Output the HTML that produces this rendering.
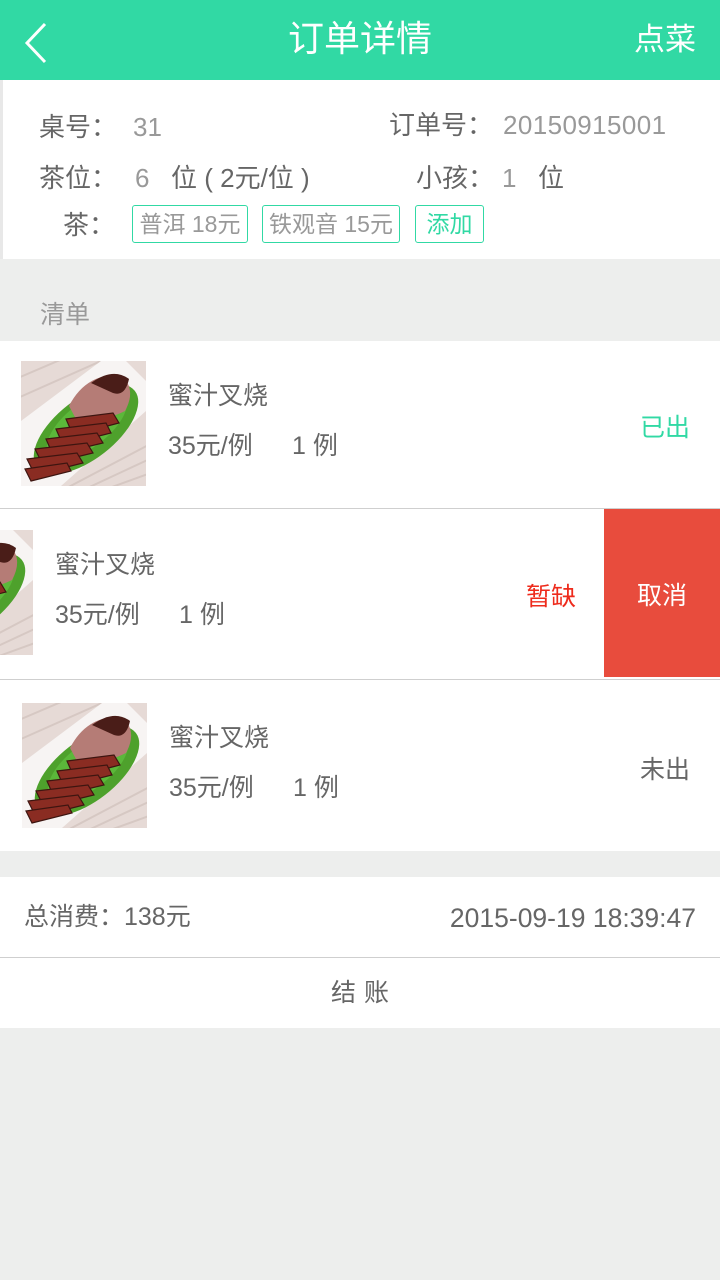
<!DOCTYPE html>
<html><head><meta charset="utf-8"><style>
*{margin:0;padding:0;box-sizing:border-box}
body{width:720px;height:1280px;background:#edeeed;font-family:"Liberation Sans","Noto Sans CJK SC",sans-serif;color:#666;position:relative;overflow:hidden}
.a{position:absolute;white-space:nowrap}
.hdr{position:absolute;left:0;top:0;width:720px;height:80px;background:#31d9a4}
.w{position:absolute;left:0;width:720px;background:#fff}
.tag{position:absolute;top:205px;height:38px;border:1px solid #31d9a4;border-radius:3px;font-size:23px;line-height:36px;text-align:center;color:#999}
.line{position:absolute;left:0;width:720px;height:1px;background:#cfcfcf}
.f{font-size:26px;line-height:34px}
.t{font-size:25px;line-height:34px}
</style></head><body>
<svg width="0" height="0" style="position:absolute"><defs>
<g id="food">
<rect width="125" height="125" fill="#e6dad6"/>
<g stroke="#d6c8c3" stroke-width="2">
<line x1="-10" y1="20" x2="60" y2="-10"/><line x1="-10" y1="40" x2="80" y2="0"/><line x1="60" y1="130" x2="135" y2="95"/><line x1="80" y1="130" x2="135" y2="110"/><line x1="40" y1="130" x2="135" y2="80"/>
</g>
<polygon points="0,100 0,125 40,125 125,50 125,20 105,0 80,0 0,60" fill="#f7f4f3"/>
<ellipse cx="65" cy="68" rx="62" ry="30" transform="rotate(-38 65 68)" fill="#4ea12c"/>
<ellipse cx="66" cy="64" rx="48" ry="22" transform="rotate(-38 66 64)" fill="#5bb83a"/>
<path d="M48 45 Q65 12 100 14 Q116 28 104 50 Q80 62 55 58 Z" fill="#b57c76"/>
<path d="M70 22 Q92 6 108 18 Q104 36 92 32 Z" fill="#4a1d18"/>
<g fill="#8a2c22" stroke="#3d1510" stroke-width="1.2">
<path d="M45 58 L92 52 L98 62 L52 74 Z"/>
<path d="M35 68 L85 62 L90 72 L42 84 Z"/>
<path d="M25 78 L76 72 L82 82 L32 94 Z"/>
<path d="M14 88 L66 82 L72 92 L22 104 Z"/>
<path d="M6 98 L56 92 L62 102 L14 114 Z"/>
<path d="M4 108 L46 102 L50 110 L10 120 Z"/>
</g>
</g></defs></svg>

<div class="hdr"></div>
<svg class="a" style="left:24px;top:22px" width="24" height="42"><polyline points="21,2 3,21 21,40" fill="none" stroke="#fff" stroke-width="3"/></svg>
<div class="a" style="left:0;width:720px;top:17px;text-align:center;font-size:36px;color:#fff;line-height:44px">订单详情</div>
<div class="a" style="right:24px;top:20px;font-size:31px;color:#fff;line-height:40px">点菜</div>

<div class="w" style="top:80px;height:179px;border-left:3px solid #e8e8e8"></div>
<div class="a f" style="left:39px;top:110px">桌号：</div>
<div class="a f" style="left:133px;top:110px;color:#999">31</div>
<div class="a f" style="left:389px;top:108px">订单号：</div>
<div class="a f" style="left:503px;top:108px;color:#999;letter-spacing:0.4px">20150915001</div>
<div class="a f" style="left:39px;top:161px">茶位：</div>
<div class="a f" style="left:135px;top:161px;color:#999">6</div>
<div class="a f" style="left:171px;top:161px">位 ( 2元/位 )</div>
<div class="a f" style="left:416px;top:161px">小孩：</div>
<div class="a f" style="left:502px;top:161px;color:#999">1</div>
<div class="a f" style="left:538px;top:161px">位</div>
<div class="a f" style="left:63px;top:208px">茶：</div>
<div class="tag" style="left:132px;width:116px">普洱 18元</div>
<div class="tag" style="left:262px;width:138px">铁观音 15元</div>
<div class="tag" style="left:415px;width:69px;color:#31d9a4">添加</div>

<div class="a" style="left:40px;top:298px;font-size:25px;color:#999;line-height:34px">清单</div>

<div class="w" style="top:341px;height:167px"></div>
<svg class="a" style="left:21px;top:361px" width="125" height="125"><use href="#food"/></svg>
<div class="a t" style="left:168px;top:379px">蜜汁叉烧</div>
<div class="a t" style="left:168px;top:429px">35元/例</div>
<div class="a t" style="left:292px;top:429px">1 例</div>
<div class="a t" style="left:640px;top:411px;color:#31d9a4">已出</div>
<div class="line" style="top:508px"></div>

<div class="w" style="top:509px;height:170px"></div>
<div class="a" style="left:0;top:530px;width:33px;height:125px;overflow:hidden"><svg style="position:absolute;left:-92px;top:0" width="125" height="125"><use href="#food"/></svg></div>
<div class="a t" style="left:55px;top:548px">蜜汁叉烧</div>
<div class="a t" style="left:55px;top:598px">35元/例</div>
<div class="a t" style="left:179px;top:598px">1 例</div>
<div class="a t" style="left:526px;top:580px;color:#ee2b1c">暂缺</div>
<div class="a" style="left:604px;top:509px;width:116px;height:168px;background:#e84c3d;color:#fff;font-size:25px;line-height:174px;text-align:center">取消</div>
<div class="line" style="top:679px"></div>

<div class="w" style="top:680px;height:171px"></div>
<svg class="a" style="left:22px;top:703px" width="125" height="125"><use href="#food"/></svg>
<div class="a t" style="left:169px;top:721px">蜜汁叉烧</div>
<div class="a t" style="left:169px;top:771px">35元/例</div>
<div class="a t" style="left:293px;top:771px">1 例</div>
<div class="a t" style="left:640px;top:753px">未出</div>

<div class="w" style="top:877px;height:80px"></div>
<div class="a t" style="left:24px;top:900px">总消费：138元</div>
<div class="a" style="right:24px;top:901px;font-size:26.5px;line-height:34px">2015-09-19 18:39:47</div>
<div class="line" style="top:957px"></div>
<div class="w" style="top:958px;height:70px"></div>
<div class="a" style="left:0;width:720px;top:976px;text-align:center;font-size:25px;line-height:34px;letter-spacing:8px;padding-left:8px">结账</div>
</body></html>
